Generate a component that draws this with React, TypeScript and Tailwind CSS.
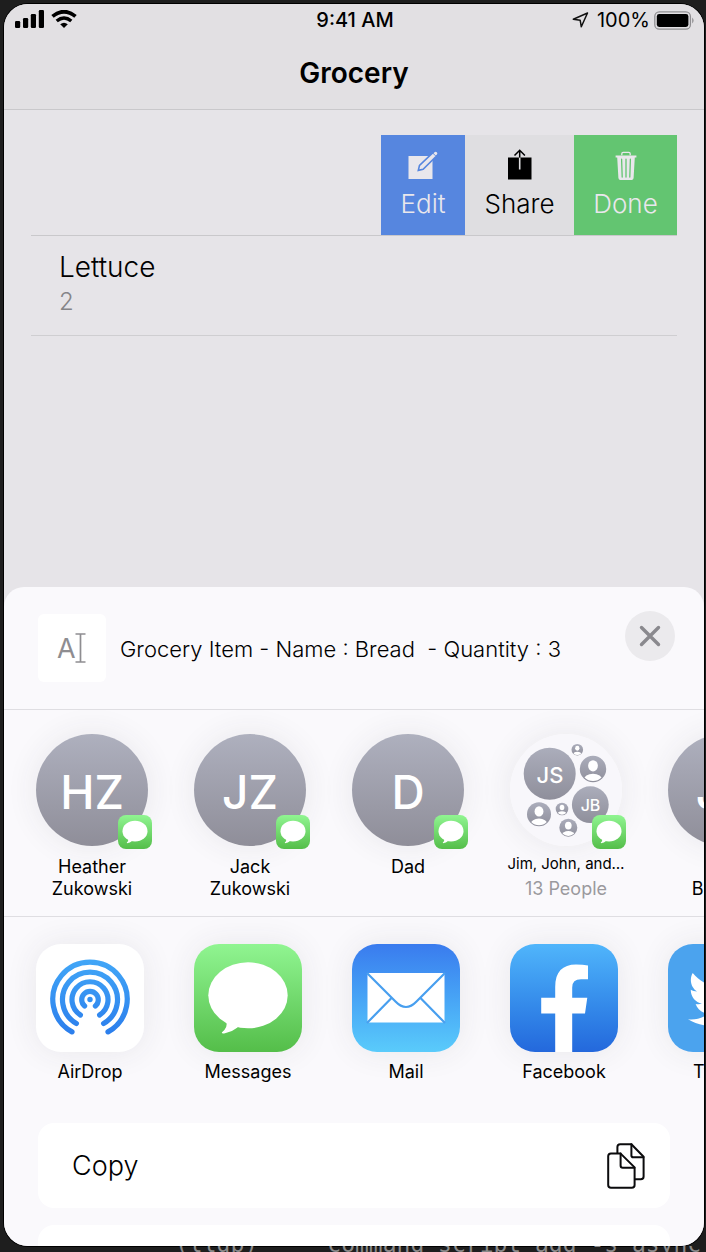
import type { ReactNode } from "react";
import { FaTwitter } from "react-icons/fa";

function SignalIcon() {
  return (
    <svg width="29" height="18" viewBox="0 0 29 18" aria-hidden="true">
      <rect x="0" y="11" width="5.200" height="7" rx="1.200" />
      <rect x="8" y="8" width="5.200" height="10" rx="1.200" />
      <rect x="15.800" y="4" width="5.200" height="14" rx="1.200" />
      <rect x="23.800" y="0" width="5.200" height="18" rx="1.200" />
    </svg>
  );
}

function WifiIcon() {
  return (
    <svg width="26" height="18" viewBox="0 0 26 18" aria-hidden="true">
      <path d="M1.500 6.400Q13-3 24.500 6.400" fill="none" stroke="#000" strokeWidth="3.800" />
      <path d="M5.700 11Q13 5 20.300 11" fill="none" stroke="#000" strokeWidth="3.500" />
      <path d="M9.200 14.300Q13 11.200 16.800 14.300L13 18Z" />
    </svg>
  );
}

function LocationIcon() {
  return (
    <svg width="17" height="16" viewBox="0 0 17 16" fill="none" stroke="#111" strokeWidth="1.500" strokeLinejoin="round" aria-hidden="true">
      <path d="M15.500 1L1.300 7.200L8.200 8.300L9.300 14.800Z" />
    </svg>
  );
}

function BatteryIcon() {
  return (
    <svg width="41" height="19" viewBox="0 0 41 19" aria-hidden="true">
      <rect x="0.800" y="0.800" width="35.600" height="17.400" rx="4.500" fill="none" stroke="#8f8e91" strokeWidth="1.300" />
      <rect x="2.800" y="3" width="31.600" height="13" rx="2.400" />
      <path d="M38.200 6.500Q41 9.500 38.200 12.500Z" fill="#8f8e91" />
    </svg>
  );
}

function EditIcon() {
  return (
    <svg width="30" height="32" viewBox="0 -2 30 32" aria-hidden="true">
      <path d="M0.500 5h24v23h-24z" fill="#e9e7ec" />
      <path d="M10.300 19.400L11.500 14.400L24.900 1.600L28.500 5L15.100 18.200Z" fill="#e9e7ec" stroke="#5686df" strokeWidth="1.600" />
      <path d="M25.500 2.200L26.900 0.900Q27.900 0.300 29 1.400Q29.800 2.600 28.900 3.500L27.700 4.500Z" fill="#e9e7ec" />
    </svg>
  );
}

function ShareIcon() {
  return (
    <svg width="30" height="32" viewBox="0 -2 30 32" fill="none" aria-hidden="true">
      <path d="M3 6.500h23.500v22H3z" fill="#000" />
      <path d="M14.700 6.500v12" stroke="#dedde0" strokeWidth="1.600" />
      <path d="M14.700 6.500V-1M9.500 4.500L14.700 -0.800L19.900 4.500" stroke="#000" strokeWidth="1.500" />
    </svg>
  );
}

function TrashIcon() {
  return (
    <svg width="30" height="32" viewBox="0 -2 30 32" fill="none" aria-hidden="true">
      <path d="M10.800 4.200V2.800Q10.800 1.400 12.200 1.400H17.800Q19.200 1.400 19.200 2.800V4.200" stroke="#e9e7ec" strokeWidth="1.300" />
      <path d="M4.600 4.600H25.400V6.400H23.800L22.600 27Q22.400 29 20.600 29H9.400Q7.600 29 7.400 27L6.200 6.400H4.600Z" fill="#e9e7ec" />
      <path d="M10.600 8.200L11.200 26M15 8.200V26M19.400 8.200L18.800 26" stroke="#63c571" strokeWidth="1.300" strokeLinecap="round" />
    </svg>
  );
}

function CopyIcon() {
  return (
    <svg width="38" height="46" viewBox="0 0 38 46" fill="none" stroke="#0b0b0d" strokeWidth="2" strokeLinejoin="round" strokeLinecap="round" aria-hidden="true">
      <path d="M10.400 10V4Q10.400 1.200 13.200 1.200H24.400L36.600 13.800V33.400Q36.600 36.200 33.800 36.200H28.400" />
      <path d="M24.400 1.200V12.400Q24.400 14.200 26.200 14.200H36.400" />
      <path d="M13.400 10.400H4Q1.200 10.400 1.200 13.200V42Q1.200 44.800 4 44.800H24.800Q27.600 44.800 27.600 42V24.400L13.400 10.400Z" />
      <path d="M13.600 10.600V22.600Q13.600 24.800 15.800 24.800H27.400" />
    </svg>
  );
}

function MessagesIcon() {
  return (
    <svg viewBox="0 0 108 108" className="size-full" fill="#fff" aria-hidden="true">
      <ellipse cx="54" cy="51.300" rx="39.700" ry="33" />
      <path d="M32 77Q34.500 83 27.800 88.500Q27.800 90 31 89.300Q38 87.800 43.500 83.400L46 78Z" />
    </svg>
  );
}

function AirDropIcon() {
  return (
    <svg viewBox="0 0 108 108" className="size-full" fill="none" aria-hidden="true">
      <defs>
        <linearGradient id="airdrop" gradientUnits="userSpaceOnUse" x1="0" y1="16" x2="0" y2="92">
          <stop offset="0" stopColor="#41a6f7" />
          <stop offset="1" stopColor="#2b7dec" />
        </linearGradient>
      </defs>
      <g stroke="url(#airdrop)" strokeWidth="5.200" strokeLinecap="round">
        <path d="M36 87.900A37.200 37.200 0 1 1 72 87.900" />
        <path d="M40.400 79.500A27.500 27.500 0 1 1 67.600 79.500" />
        <path d="M44.400 71A18 18 0 1 1 63.600 71" />
        <path d="M48.600 62A8.300 8.300 0 1 1 59.400 62" />
      </g>
      <circle cx="54" cy="55.500" r="2.700" fill="#3390f1" />
    </svg>
  );
}

function MailIcon() {
  return (
    <svg viewBox="0 0 108 108" className="size-full" fill="none" aria-hidden="true">
      <rect x="15.500" y="29" width="77" height="49.500" rx="2" fill="#fff" />
      <g stroke="#489fef" strokeWidth="2.200">
        <path d="M15 29L43.500 57.500Q54 68.500 64.500 57.500L93 29" />
        <path d="M15 79L39.500 54M93 79L68.500 54" />
      </g>
    </svg>
  );
}

function FacebookIcon() {
  return (
    <svg viewBox="0 0 108 108" className="size-full" aria-hidden="true">
      <path d="M45.200 108V69.500H31.200V53.800H45.200V43C45.200 28 52.500 20.600 66 20.600Q73 20.600 78 21.500V35.300H71Q62.200 35.300 62.200 43.500V53.800H77.300L75 69.500H62.200V108Z" fill="#fff" />
    </svg>
  );
}

const people = [
  { x: 67.3, y: 15.7, r: 5.8 },
  { x: 83, y: 35, r: 13.2 },
  { x: 29, y: 80.3, r: 12 },
  { x: 52, y: 75, r: 6.3 },
  { x: 58.3, y: 93.7, r: 9 },
];

function GroupAvatar() {
  return (
    <svg viewBox="0 0 112 112" className="size-full" aria-hidden="true">
      <defs>
        <linearGradient id="person" x1="0" y1="0" x2="0" y2="1">
          <stop offset="0" stopColor="#abadbb" />
          <stop offset="1" stopColor="#8f8f9b" />
        </linearGradient>
        <clipPath id="head">
          <circle r="9.100" />
        </clipPath>
      </defs>
      <circle cx="39.700" cy="39.700" r="26" fill="url(#person)" />
      <circle cx="80.300" cy="70.700" r="18.400" fill="url(#person)" />
      <text x="40" y="49" textAnchor="middle" fill="#fff" className="font-['Inter',sans-serif] text-[22px] font-medium">JS</text>
      <text x="80.500" y="76.500" textAnchor="middle" fill="#fff" className="font-['Inter',sans-serif] text-[16px] font-medium">JB</text>
      {people.map((p) => (
        <g key={p.x} transform={`translate(${p.x} ${p.y}) scale(${p.r / 10})`}>
          <circle r="10" fill="url(#person)" />
          <g clipPath="url(#head)" fill="#fff">
            <ellipse cy="-2.400" rx="3.700" ry="4.300" />
            <ellipse cy="8.200" rx="7" ry="4.600" />
          </g>
        </g>
      ))}
    </svg>
  );
}

function Avatar({ initials }: { initials: string }) {
  return (
    <span className="flex size-full items-center justify-center rounded-full bg-linear-to-b from-[#aeb0be] to-[#8f8e99] pt-1 text-[46px] font-[550] text-white">
      {initials}
    </span>
  );
}

const contacts: { id: string; picture: ReactNode; label: ReactNode }[] = [
  { id: "heather", picture: <Avatar initials="HZ" />, label: <>Heather<br />Zukowski</> },
  { id: "jack", picture: <Avatar initials="JZ" />, label: <>Jack<br />Zukowski</> },
  { id: "dad", picture: <Avatar initials="D" />, label: "Dad" },
  {
    id: "group",
    picture: <span className="block size-full rounded-full bg-[#f8f7fb]"><GroupAvatar /></span>,
    label: <><span className="-mt-1 block pt-px pb-[3px] text-[15px]/[22px]">Jim, John, and…</span><span className="block text-[#9b9a9e]">13 People</span></>,
  },
  { id: "jim", picture: <Avatar initials="JB" />, label: <>Jim<br />Browne</> },
];

const apps: { name: string; tile: string; icon: ReactNode }[] = [
  { name: "AirDrop", tile: "bg-white", icon: <AirDropIcon /> },
  { name: "Messages", tile: "bg-linear-to-b from-[#90f591] to-[#54be49]", icon: <MessagesIcon /> },
  { name: "Mail", tile: "bg-linear-to-b from-[#3a7bee] to-[#5acbfb]", icon: <MailIcon /> },
  { name: "Facebook", tile: "bg-linear-to-b from-[#50b5fb] to-[#2468dc]", icon: <FacebookIcon /> },
  { name: "Twitter", tile: "bg-[#4ba3ee] text-white", icon: <FaTwitter size={68} aria-hidden="true" /> },
];

function StatusBar() {
  return (
    <div className="grid h-8 grid-cols-3 items-center pr-[9px] pl-[11px] text-xl">
      <div className="flex items-center gap-[7px] pb-[2px]">
        <SignalIcon />
        <WifiIcon />
      </div>
      <span className="text-center font-medium">9:41 AM</span>
      <div className="flex items-center justify-end gap-1">
        <LocationIcon />
        <span className="pl-1">100%</span>
        <BatteryIcon />
      </div>
    </div>
  );
}

function GroceryList() {
  return (
    <main className="flex-1 px-[27px] pt-[25px]">
      <ul>
        <li className="flex h-[101px] justify-end border-b border-[#c9c8cb] text-[26px]/8 font-[350]">
          <button className="flex w-[84px] flex-col items-center bg-[#5686df] pt-[14px] text-[#e9e7ec]">
            <EditIcon />
            <span className="pt-[7px]">Edit</span>
          </button>
          <button className="flex w-[109px] flex-col items-center bg-[#dfdee1] pt-[14px]">
            <ShareIcon />
            <span className="pt-[7px]">Share</span>
          </button>
          <button className="flex w-[103px] flex-col items-center bg-[#63c571] pt-[14px] text-[#e9e7ec]">
            <TrashIcon />
            <span className="pt-[7px]">Done</span>
          </button>
        </li>
        <li className="h-[100px] border-b border-[#cfced1] px-7 pt-[13px]">
          <p className="text-[28px]/9 font-[350]">Lettuce</p>
          <p className="pt-px text-2xl/8 font-[350] text-[#858488]">2</p>
        </li>
      </ul>
    </main>
  );
}

function ShareSheet() {
  return (
    <section aria-label="Share" className="overflow-hidden rounded-t-[20px] bg-[#faf9fc]">
      <header className="flex h-[123px] items-start border-b border-[#dfdee2] pt-6 pr-[29px] pl-[34px]">
        <div className="mt-[3px] flex size-[68px] shrink-0 items-center justify-center rounded-md bg-white">
          <svg width="30" height="32" viewBox="0 0 30 32" fill="none" stroke="#8e8d91" aria-hidden="true">
            <text x="0" y="26" fill="#8e8d91" stroke="none" className="font-['Inter',sans-serif] text-[27px]">A</text>
            <path d="M18.500 2H28.500M23.500 2V30M18.500 30H28.500" strokeWidth="1.700" />
          </svg>
        </div>
        <h2 className="mt-6 flex-1 pl-[14px] text-[22px]/7 font-[350] whitespace-pre">Grocery Item - Name : Bread  - Quantity : 3</h2>
        <button aria-label="Close" className="flex size-[50px] shrink-0 items-center justify-center rounded-full bg-[#ebeaed]">
          <svg width="22" height="22" viewBox="0 0 22 22" stroke="#8a898e" strokeWidth="3.400" strokeLinecap="round" aria-hidden="true">
            <path d="M2.500 2.500L19.500 19.500M19.500 2.500L2.500 19.500" />
          </svg>
        </button>
      </header>

      <ul className="flex h-[207px] gap-[46px] overflow-hidden border-b border-[#dfdee2] pt-6 pl-8">
        {contacts.map((c) => (
          <li key={c.id} className="w-28 shrink-0">
            <button className="flex w-full flex-col items-center">
              <span className="relative block size-28 rounded-full shadow-[0_0_32px_rgba(60,50,70,0.09)]">
                {c.picture}
                <span className="absolute -right-1 -bottom-[3px] size-[34px] rounded-lg bg-linear-to-b from-[#90f591] to-[#54be49]">
                  <MessagesIcon />
                </span>
              </span>
              <span className="pt-[10px] text-lg/[22px] whitespace-nowrap">{c.label}</span>
            </button>
          </li>
        ))}
      </ul>

      <ul className="flex gap-[50px] overflow-hidden pt-[27px] pb-[39px] pl-8">
        {apps.map((a) => (
          <li key={a.name} className="w-[108px] shrink-0">
            <button className="flex w-full flex-col items-center">
              <span className={`flex size-[108px] items-center justify-center overflow-hidden rounded-[25px] shadow-[0_0_32px_rgba(60,50,70,0.09)] ${a.tile}`}>
                {a.icon}
              </span>
              <span className="pt-2 text-lg/6">{a.name}</span>
            </button>
          </li>
        ))}
      </ul>

      <div className="flex flex-col gap-[17px] px-[34px]">
        <button className="flex h-[85px] items-center justify-between rounded-[16px] bg-white pt-px pr-[25px] pl-[34px] text-[27px] font-[350]">
          Copy
          <CopyIcon />
        </button>
        <div className="h-[21px] rounded-t-[16px] bg-white" />
      </div>
    </section>
  );
}

export default function App() {
  return (
    <div className="flex min-h-screen flex-col overflow-hidden bg-[#1e1e1e] pt-1 pr-[2px] pl-1 font-['Inter',sans-serif] text-black">
      <div className="flex flex-1 flex-col overflow-hidden rounded-[24px] bg-[#e6e4e8] shadow-[0_0_0_1px_#000]">
        <header className="h-[106px] border-b border-[#c9c8cb] bg-[#e2e0e3]">
          <StatusBar />
          <h1 className="pt-[19px] text-center text-[28px]/9 font-semibold">Grocery</h1>
        </header>
        <GroceryList />
        <ShareSheet />
      </div>
      <div className="flex h-[6px] items-end overflow-hidden pl-[171px] font-['DejaVu_Sans_Mono',monospace] text-[23px]/4 whitespace-pre text-[#8a8a8a]">
        <span>(lldb)     command script add -s async</span>
      </div>
    </div>
  );
}
